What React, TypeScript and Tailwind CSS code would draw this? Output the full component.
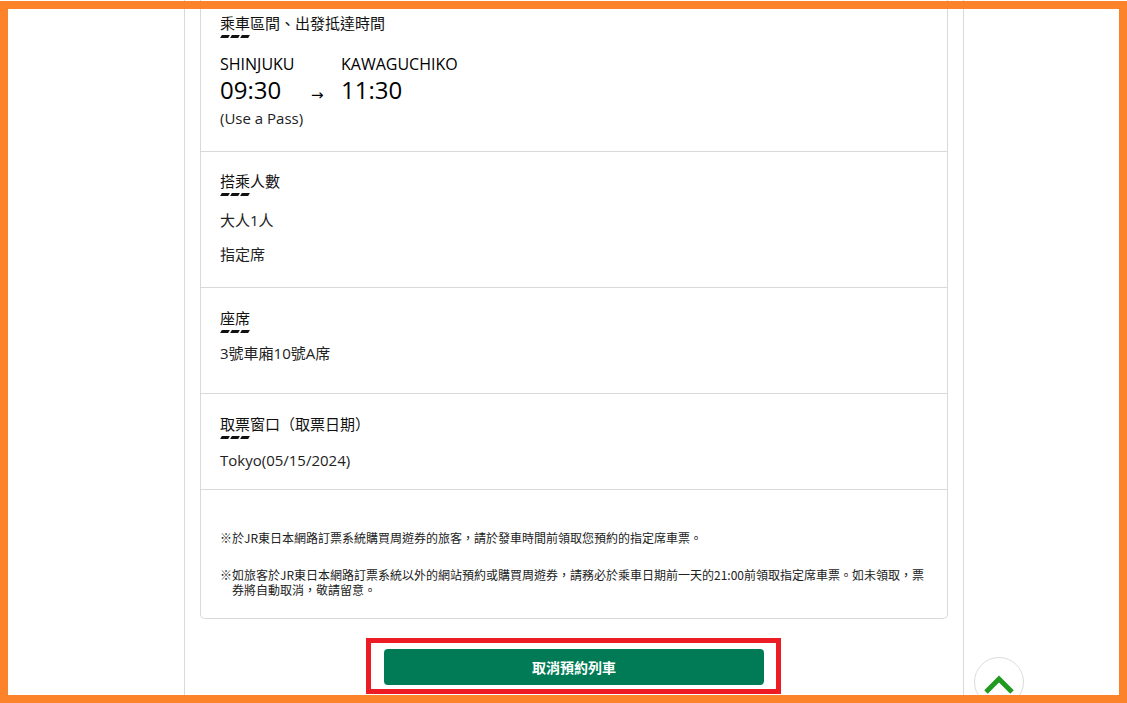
import React from "react";

function Dashes() {
  return (
    <div className="mt-[1px] flex h-[3px] gap-[2px] pl-[1px]">
      <span className="block h-[3px] w-[8px] -skew-x-[30deg] bg-[#111]" />
      <span className="block h-[3px] w-[8px] -skew-x-[30deg] bg-[#111]" />
      <span className="block h-[3px] w-[8px] -skew-x-[30deg] bg-[#111]" />
    </div>
  );
}

function Heading({ children }: { children: React.ReactNode }) {
  return (
    <>
      <div className="text-[15px] leading-[22px] text-[#111]">{children}</div>
      <Dashes />
    </>
  );
}

export default function App() {
  return (
    <div className="relative h-[703px] w-[1127px] overflow-hidden bg-white font-['Open_Sans','Noto_Sans_CJK_TC',sans-serif] text-[#222]">
      <div className="ml-[184px] h-full w-[780px] border-x border-[#d9d9d9] px-[15px]">
        <div className="rounded-b-[5px] border border-t-0 border-[#d9d9d9]">
          {/* Section 1 */}
          <div className="px-[19px] pt-[12px] pb-[22px]">
            <Heading>乘車區間、出發抵達時間</Heading>
            <div className="mt-[15px] grid grid-cols-[91px_30px_auto] text-black">
              <div className="text-[16px] leading-[22px]">SHINJUKU</div>
              <div />
              <div className="text-[16px] leading-[22px]">KAWAGUCHIKO</div>
              <div className="text-[24px] leading-[30px]">09:30</div>
              <div className="pt-[12px] font-['DejaVu_Sans',sans-serif] text-[15px] leading-[16px]">→</div>
              <div className="text-[24px] leading-[30px]">11:30</div>
              <div className="col-span-3 mt-[2px] text-[15px] leading-[22px] text-[#222]">(Use a Pass)</div>
            </div>
          </div>

          {/* Section 2 */}
          <div className="border-t border-[#d9d9d9] px-[19px] pt-[18px] pb-[22px]">
            <Heading>搭乘人數</Heading>
            <div className="mt-[13px] text-[15px] leading-[22px]">大人1人</div>
            <div className="mt-[12px] text-[15px] leading-[22px]">指定席</div>
          </div>

          {/* Section 3 */}
          <div className="border-t border-[#d9d9d9] px-[19px] pt-[19px] pb-[29px]">
            <Heading>座席</Heading>
            <div className="mt-[9px] text-[15px] leading-[22px]">3號車廂10號A席</div>
          </div>

          {/* Section 4 */}
          <div className="border-t border-[#d9d9d9] px-[19px] pt-[19px] pb-[18px]">
            <Heading>取票窗口（取票日期）</Heading>
            <div className="mt-[10px] text-[15px] leading-[22px]">Tokyo(05/15/2024)</div>
          </div>

          {/* Section 5 */}
          <div className="border-t border-[#d9d9d9] px-[19px] pt-[40px] pb-[21px] font-['Noto_Sans_CJK_TC',sans-serif] text-[12px] leading-[16px] text-[#222]">
            <p className="pl-[12px] -indent-[12px]">
              ※於JR東日本網路訂票系統購買周遊券的旅客，請於發車時間前領取您預約的指定席車票。
            </p>
            <p className="mt-[21px] pl-[12px] -indent-[12px] leading-[15px]">
              ※如旅客於JR東日本網路訂票系統以外的網站預約或購買周遊券，請務必於乘車日期前一天的21:00前領取指定席車票。如未領取，票券將自動取消，敬請留意。
            </p>
          </div>
        </div>

        <div className="flex justify-center pt-[30px]">
          <button className="h-[36px] w-[380px] rounded-[4px] bg-[#007b55] font-['Noto_Sans_CJK_TC',sans-serif] text-[14px] font-bold text-white">
            取消預約列車
          </button>
        </div>
      </div>

      {/* red annotation box */}
      <div className="pointer-events-none absolute left-[366px] top-[638px] h-[56px] w-[415px] border-[5px] border-[#ed1c24]" />

      {/* scroll to top */}
      <div className="absolute left-[974px] top-[657px] flex h-[50px] w-[50px] items-start justify-center rounded-full border border-[#dcdcdc] bg-white">
        <svg width="34" height="26" viewBox="0 0 34 26" className="mt-[13px]">
          <polyline points="4,21 17,8 30,21" fill="none" stroke="#229a22" strokeWidth="5" strokeLinejoin="miter" />
        </svg>
      </div>

      {/* orange frame */}
      <div className="pointer-events-none absolute inset-x-0 bottom-0 top-[1px] border-[8px] border-[#fd832b]" />
    </div>
  );
}
